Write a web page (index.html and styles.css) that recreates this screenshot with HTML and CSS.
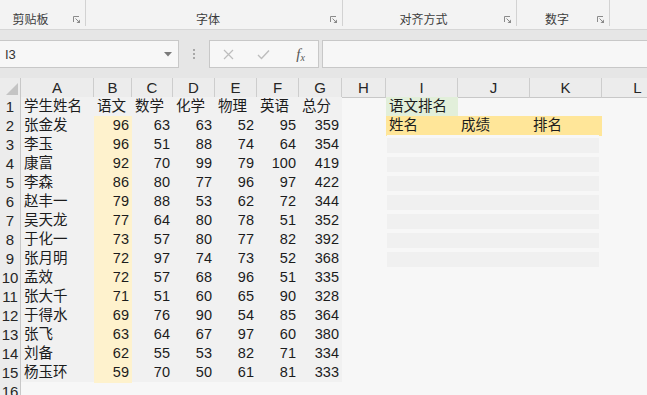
FILE: index.html
```html
<!DOCTYPE html>
<html lang="zh">
<head>
<meta charset="utf-8">
<title>Excel</title>
<link rel="stylesheet" href="styles.css">
</head>
<body>
<div class="app">
  <div class="ribbon">
    <div class="grp g1"><span class="lbl">剪贴板</span><svg class="dl" width="8" height="8" viewBox="0 0 8 8"><path d="M0.5 6V0.5H6" fill="none" stroke="#8a8a8a"/><path d="M2.5 2.5L6 6" stroke="#8a8a8a"/><path d="M7 3.5V7H3.5z" fill="#8a8a8a"/></svg></div>
    <div class="grp g2"><span class="lbl">字体</span><svg class="dl" width="8" height="8" viewBox="0 0 8 8"><path d="M0.5 6V0.5H6" fill="none" stroke="#8a8a8a"/><path d="M2.5 2.5L6 6" stroke="#8a8a8a"/><path d="M7 3.5V7H3.5z" fill="#8a8a8a"/></svg></div>
    <div class="grp g3"><span class="lbl">对齐方式</span><svg class="dl" width="8" height="8" viewBox="0 0 8 8"><path d="M0.5 6V0.5H6" fill="none" stroke="#8a8a8a"/><path d="M2.5 2.5L6 6" stroke="#8a8a8a"/><path d="M7 3.5V7H3.5z" fill="#8a8a8a"/></svg></div>
    <div class="grp g4"><span class="lbl">数字</span><svg class="dl" width="8" height="8" viewBox="0 0 8 8"><path d="M0.5 6V0.5H6" fill="none" stroke="#8a8a8a"/><path d="M2.5 2.5L6 6" stroke="#8a8a8a"/><path d="M7 3.5V7H3.5z" fill="#8a8a8a"/></svg></div>
    <div class="grp g5"></div>
  </div>

  <div class="fbar">
    <div class="namebox"><span class="ref">I3</span><svg class="caret" width="8" height="5" viewBox="0 0 8 5"><path d="M0 0H8L4 4.5z" fill="#7a7a7a"/></svg></div>
    <div class="dots"><i></i><i></i><i></i></div>
    <div class="fbtns">
      <span class="fb"><svg width="11" height="11" viewBox="0 0 11 11"><path d="M1 1L10 10M10 1L1 10" stroke="#bdbdbd" stroke-width="1.2"/></svg></span>
      <span class="fb"><svg width="13" height="11" viewBox="0 0 13 11"><path d="M1 6L4.5 9.5L12 1.5" fill="none" stroke="#bdbdbd" stroke-width="1.4"/></svg></span>
      <span class="fb fx">f<span class="sub">x</span></span>
    </div>
    <div class="finput"></div>
  </div>

  <div class="sheet">
    <div class="row hdr"><div class="corner"><svg width="12" height="12" viewBox="0 0 12 12"><path d="M12 0V12H0z" fill="#c4c4c4"/></svg></div><div class="ch">A</div><div class="ch">B</div><div class="ch">C</div><div class="ch">D</div><div class="ch">E</div><div class="ch">F</div><div class="ch">G</div><div class="ch">H</div><div class="ch">I</div><div class="ch">J</div><div class="ch">K</div><div class="ch">L</div></div>

    <div class="row"><div class="rh">1</div><div class="c d u">学生姓名</div><div class="c d u">语文</div><div class="c d u">数学</div><div class="c d u">化学</div><div class="c d u">物理</div><div class="c d u">英语</div><div class="c d u">总分</div><div class="c"></div><div class="c gr">语文排名</div><div class="c"></div><div class="c"></div><div class="c"></div></div>

    <div class="row"><div class="rh">2</div><div class="c d">张金发</div><div class="c y n">96</div><div class="c d n">63</div><div class="c d n">63</div><div class="c d n">52</div><div class="c d n">95</div><div class="c d n">359</div><div class="c"></div><div class="c o">姓名</div><div class="c o">成绩</div><div class="c o">排名</div><div class="c"></div></div>

    <div class="row"><div class="rh">3</div><div class="c d">李玉</div><div class="c y n">96</div><div class="c d n">51</div><div class="c d n">88</div><div class="c d n">74</div><div class="c d n">64</div><div class="c d n">354</div><div class="c"></div><div class="c q ql"></div><div class="c q"></div><div class="c q qr"></div><div class="c"></div></div>

    <div class="row"><div class="rh">4</div><div class="c d">康富</div><div class="c y n">92</div><div class="c d n">70</div><div class="c d n">99</div><div class="c d n">79</div><div class="c d n">100</div><div class="c d n">419</div><div class="c"></div><div class="c q ql"></div><div class="c q"></div><div class="c q qr"></div><div class="c"></div></div>

    <div class="row"><div class="rh">5</div><div class="c d">李森</div><div class="c y n">86</div><div class="c d n">80</div><div class="c d n">77</div><div class="c d n">96</div><div class="c d n">97</div><div class="c d n">422</div><div class="c"></div><div class="c q ql"></div><div class="c q"></div><div class="c q qr"></div><div class="c"></div></div>

    <div class="row"><div class="rh">6</div><div class="c d">赵丰一</div><div class="c y n">79</div><div class="c d n">88</div><div class="c d n">53</div><div class="c d n">62</div><div class="c d n">72</div><div class="c d n">344</div><div class="c"></div><div class="c q ql"></div><div class="c q"></div><div class="c q qr"></div><div class="c"></div></div>

    <div class="row"><div class="rh">7</div><div class="c d">吴天龙</div><div class="c y n">77</div><div class="c d n">64</div><div class="c d n">80</div><div class="c d n">78</div><div class="c d n">51</div><div class="c d n">352</div><div class="c"></div><div class="c q ql"></div><div class="c q"></div><div class="c q qr"></div><div class="c"></div></div>

    <div class="row"><div class="rh">8</div><div class="c d">于化一</div><div class="c y n">73</div><div class="c d n">57</div><div class="c d n">80</div><div class="c d n">77</div><div class="c d n">82</div><div class="c d n">392</div><div class="c"></div><div class="c q ql"></div><div class="c q"></div><div class="c q qr"></div><div class="c"></div></div>

    <div class="row"><div class="rh">9</div><div class="c d">张月明</div><div class="c y n">72</div><div class="c d n">97</div><div class="c d n">74</div><div class="c d n">73</div><div class="c d n">52</div><div class="c d n">368</div><div class="c"></div><div class="c q ql"></div><div class="c q"></div><div class="c q qr"></div><div class="c"></div></div>

    <div class="row"><div class="rh">10</div><div class="c d">孟效</div><div class="c y n">72</div><div class="c d n">57</div><div class="c d n">68</div><div class="c d n">96</div><div class="c d n">51</div><div class="c d n">335</div><div class="c"></div><div class="c"></div><div class="c"></div><div class="c"></div><div class="c"></div></div>

    <div class="row"><div class="rh">11</div><div class="c d">张大千</div><div class="c y n">71</div><div class="c d n">51</div><div class="c d n">60</div><div class="c d n">65</div><div class="c d n">90</div><div class="c d n">328</div><div class="c"></div><div class="c"></div><div class="c"></div><div class="c"></div><div class="c"></div></div>

    <div class="row"><div class="rh">12</div><div class="c d">于得水</div><div class="c y n">69</div><div class="c d n">76</div><div class="c d n">90</div><div class="c d n">54</div><div class="c d n">85</div><div class="c d n">364</div><div class="c"></div><div class="c"></div><div class="c"></div><div class="c"></div><div class="c"></div></div>

    <div class="row"><div class="rh">13</div><div class="c d">张飞</div><div class="c y n">63</div><div class="c d n">64</div><div class="c d n">67</div><div class="c d n">97</div><div class="c d n">60</div><div class="c d n">380</div><div class="c"></div><div class="c"></div><div class="c"></div><div class="c"></div><div class="c"></div></div>

    <div class="row"><div class="rh">14</div><div class="c d">刘备</div><div class="c y n">62</div><div class="c d n">55</div><div class="c d n">53</div><div class="c d n">82</div><div class="c d n">71</div><div class="c d n">334</div><div class="c"></div><div class="c"></div><div class="c"></div><div class="c"></div><div class="c"></div></div>

    <div class="row"><div class="rh">15</div><div class="c d">杨玉环</div><div class="c y n">59</div><div class="c d n">70</div><div class="c d n">50</div><div class="c d n">61</div><div class="c d n">81</div><div class="c d n">333</div><div class="c"></div><div class="c"></div><div class="c"></div><div class="c"></div><div class="c"></div></div>

    <div class="row"><div class="rh">16</div><div class="c"></div><div class="c"></div><div class="c"></div><div class="c"></div><div class="c"></div><div class="c"></div><div class="c"></div><div class="c"></div><div class="c"></div><div class="c"></div><div class="c"></div><div class="c"></div></div>
  </div>
</div>
</body>
</html>
```

FILE: styles.css
```css
html, body {
  margin: 0;
  padding: 0;
  background: #f7f7f7;
}

.app {
  width: 647px;
  height: 395px;
  overflow: hidden;
  font-family: "Liberation Sans", "Noto Sans CJK SC", sans-serif;
  color: #1c1c1c;
}

/* ---------- ribbon ---------- */
.ribbon {
  display: flex;
  height: 29px;
  background: #f3f3f3;
  border-bottom: 1px solid #d6d6d6;
}

.grp {
  display: flex;
  align-items: flex-end;
  height: 26px;
  box-sizing: border-box;
  border-right: 1px solid #d2d2d2;
}

.g1 { width: 86px; }
.g2 { width: 257px; }
.g3 { width: 174px; }
.g4 { width: 93px; }
.g5 { flex: 1; border-right: none; }

.lbl {
  flex: 1;
  text-align: center;
  font-family: "Noto Sans CJK SC", sans-serif;
  font-size: 12px;
  line-height: 16px;
  color: #3c3c3c;
  margin-bottom: -1px;
}

.g1 .lbl { padding-right: 12px; }

.dl {
  display: block;
  margin: 0 4px 2px 0;
}

/* ---------- formula bar ---------- */
.fbar {
  display: flex;
  align-items: flex-start;
  height: 48px;
  box-sizing: border-box;
  padding-top: 10px;
  background: #e6e6e6;
}

.namebox {
  display: flex;
  align-items: center;
  justify-content: space-between;
  width: 179px;
  height: 28px;
  box-sizing: border-box;
  border: 1px solid #c8c8c8;
  border-left: none;
  background: #f7f7f7;
  padding: 0 6px 0 5px;
}

.ref {
  font-size: 13px;
  color: #333;
}

.caret { display: block; }

.dots {
  width: 30px;
  height: 28px;
  display: flex;
  flex-direction: column;
  align-items: center;
  justify-content: center;
  gap: 2px;
}

.dots i {
  display: block;
  width: 2px;
  height: 2px;
  background: #a8a8a8;
}

.fbtns {
  display: flex;
  align-items: center;
  width: 110px;
  height: 28px;
  box-sizing: border-box;
  border: 1px solid #c8c8c8;
  background: #f7f7f7;
  padding-left: 1px;
}

.fb {
  width: 35px;
  display: flex;
  justify-content: center;
  align-items: center;
}

.fb svg { display: block; }

.fx {
  font-family: "Liberation Serif", serif;
  font-style: italic;
  font-size: 15px;
  color: #555;
  padding-left: 3px;
}

.fx .sub {
  font-size: 10px;
  position: relative;
  top: 3px;
}

.finput {
  flex: 1;
  height: 28px;
  margin-left: 3px;
  box-sizing: border-box;
  border: 1px solid #c8c8c8;
  border-right: none;
  background: #f7f7f7;
}

/* ---------- sheet ---------- */
.sheet {
  width: 674px;
}

.row {
  display: grid;
  grid-template-columns: 21px 73px 38px 41px 42px 42px 42px 43px 44px 72px 72px 72px 72px;
  height: 19px;
}

.hdr {
  background: #ececec;
}

.corner {
  border-right: 1px solid #c8c8c8;
  border-bottom: 1px solid #c8c8c8;
  box-sizing: border-box;
  display: flex;
  align-items: flex-end;
  justify-content: flex-end;
  padding: 0 2px 2px 0;
}

.corner svg { display: block; }

.ch {
  box-sizing: border-box;
  border-right: 1px solid #cdcdcd;
  border-bottom: 1px solid #c8c8c8;
  text-align: center;
  font-size: 15px;
  line-height: 19px;
  color: #262626;
}

.rh {
  box-sizing: border-box;
  background: #ececec;
  border-right: 1px solid #c8c8c8;
  border-bottom: 1px solid #d6d6d6;
  text-align: center;
  font-size: 15px;
  line-height: 19px;
  color: #262626;
}

.c {
  box-sizing: border-box;
  font-size: 14.5px;
  line-height: 19px;
  padding: 0 3px;
  white-space: nowrap;
  overflow: hidden;
}

.n { text-align: right; }

.d {
  background: #f1f1f1;
  border-bottom: 1px solid #f7f7f7;
}

.u {
  border-bottom: 1px solid #111;
}

.y {
  background: #fef2cd;
}

.gr {
  background: #e2efda;
  border-bottom: 1px solid #f7f7f7;
}

.o {
  background: #ffe699;
}

.q {
  background: linear-gradient(#f7f7f7 0 3px, #f0f0f0 3px 18px, #f7f7f7 18px);
}
.ql { background-position: 1px 0; background-repeat: no-repeat; }
.qr { background-size: calc(100% - 3px) 100%; background-repeat: no-repeat; }
```
